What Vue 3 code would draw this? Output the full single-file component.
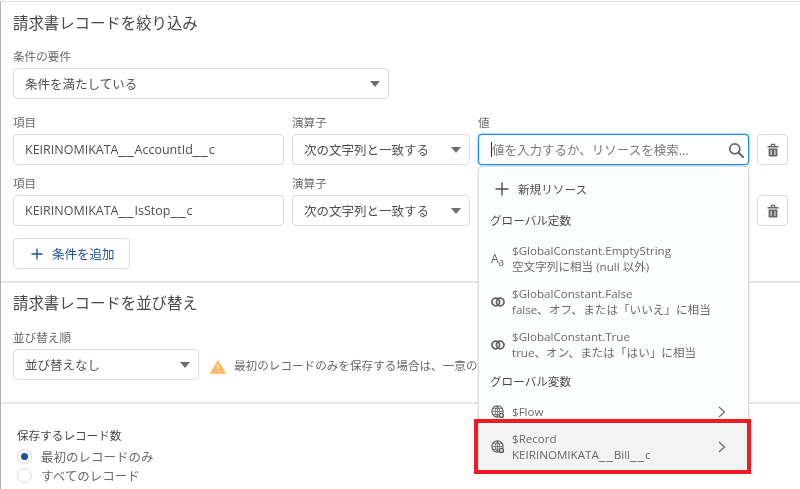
<script setup>
const conditionRows = [
  { field: "KEIRINOMIKATA__AccountId__c", active: true },
  { field: "KEIRINOMIKATA__IsStop__c", active: false },
];

const constants = [
  { icon: "text", name: "$GlobalConstant.EmptyString", desc: "空文字列に相当 (null 以外)" },
  { icon: "rings", name: "$GlobalConstant.False", desc: "false、オフ、または「いいえ」に相当" },
  { icon: "rings", name: "$GlobalConstant.True", desc: "true、オン、または「はい」に相当" },
];

// the double underscores are wider in the original font
const apiParts = (name) => name.split(/(__)/);
</script>

<template>
  <div class="page">
    <section class="panel filter">
      <h2>請求書レコードを絞り込み</h2>
      <label class="label">条件の要件</label>
      <div class="box select wide">
        <span>条件を満たしている</span>
        <i class="caret"></i>
      </div>

      <div v-for="row in conditionRows" :key="row.field" class="cond">
        <div class="col col-field">
          <label class="label">項目</label>
          <div class="box">
            <span>
              <span v-for="(p, i) in apiParts(row.field)" :key="i" :class="{ us: p === '__' }">{{ p }}</span>
            </span>
          </div>
        </div>
        <div class="col col-op">
          <label class="label">演算子</label>
          <div class="box select">
            <span>次の文字列と一致する</span>
            <i class="caret"></i>
          </div>
        </div>
        <div class="col col-val">
          <label v-if="row.active" class="label">値</label>
          <label v-else class="label">&nbsp;</label>
          <div v-if="row.active" class="box search">
            <span class="cursor"></span>
            <span class="placeholder">値を入力するか、リソースを検索...</span>
            <svg class="search-icon" viewBox="0 0 16 16" width="16" height="16">
              <circle cx="6.8" cy="6.8" r="5" fill="none" stroke="#6b6967" stroke-width="1.8" />
              <path d="M10.5 10.5L15 15" stroke="#6b6967" stroke-width="2.1" stroke-linecap="round" />
            </svg>

            <div class="dropdown">
              <div class="new-res">
                <svg viewBox="0 0 14 14" width="14" height="14">
                  <path d="M7 0.5V13.5M0.5 7H13.5" stroke="#514f4d" stroke-width="1.4" />
                </svg>
                <span>新規リソース</span>
              </div>
              <div class="group group-first">グローバル定数</div>
              <div v-for="c in constants" :key="c.name" class="item">
                <span v-if="c.icon === 'text'" class="aa">A<small>a</small></span>
                <svg v-else class="item-icon" viewBox="0 0 14 14" width="14" height="14">
                  <circle cx="4.8" cy="7" r="3.8" fill="none" stroke="#666462" stroke-width="1.8" />
                  <circle cx="9.2" cy="7" r="3.8" fill="none" stroke="#666462" stroke-width="1.8" />
                </svg>
                <div class="item-text">
                  <div>{{ c.name }}</div>
                  <div>{{ c.desc }}</div>
                </div>
              </div>
              <div class="group group-second">グローバル変数</div>
              <div class="item flow">
                <svg class="item-icon" viewBox="0 0 14 14" width="14" height="14">
                  <circle cx="6.5" cy="6.5" r="5.6" fill="none" stroke="#666462" stroke-width="1.2" />
                  <path d="M1 6.5H12M6.5 1V12M2 3.6H11M2 9.4H11M6.5 1C3.6 4 3.6 9 6.5 12M6.5 1C9.4 4 9.4 9 6.5 12" fill="none" stroke="#666462" stroke-width="0.8" />
                  <circle cx="10.4" cy="10.4" r="2.9" fill="#fff" />
                  <circle cx="10.4" cy="10.4" r="2" fill="none" stroke="#55534f" stroke-width="1.4" />
                </svg>
                <div class="item-text"><div>$Flow</div></div>
                <svg class="chev" viewBox="0 0 8 12" width="8" height="12">
                  <path d="M1 1L6.5 6L1 11" fill="none" stroke="#706e6b" stroke-width="1.3" />
                </svg>
              </div>
              <div class="item record">
                <svg class="item-icon" viewBox="0 0 14 14" width="14" height="14">
                  <circle cx="6.5" cy="6.5" r="5.6" fill="none" stroke="#666462" stroke-width="1.2" />
                  <path d="M1 6.5H12M6.5 1V12M2 3.6H11M2 9.4H11M6.5 1C3.6 4 3.6 9 6.5 12M6.5 1C9.4 4 9.4 9 6.5 12" fill="none" stroke="#666462" stroke-width="0.8" />
                  <circle cx="10.4" cy="10.4" r="2.9" fill="#f3f3f3" />
                  <circle cx="10.4" cy="10.4" r="2" fill="none" stroke="#55534f" stroke-width="1.4" />
                </svg>
                <div class="item-text">
                  <div>$Record</div>
                  <div>
                    <span v-for="(p, i) in apiParts('KEIRINOMIKATA__Bill__c')" :key="i" :class="{ us: p === '__' }">{{ p }}</span>
                  </div>
                </div>
                <svg class="chev" viewBox="0 0 8 12" width="8" height="12">
                  <path d="M1 1L6.5 6L1 11" fill="none" stroke="#706e6b" stroke-width="1.3" />
                </svg>
                <div class="highlight"></div>
              </div>
            </div>
          </div>
          <div v-else class="box"></div>
        </div>
        <div class="box trash">
          <svg viewBox="0 0 14 14" width="14" height="14">
            <path d="M1.5 3H12.5V4.6H1.5ZM4.8 0.8H9.2V3H8V2H6V3H4.8ZM2.6 5.4H11.4V12.6A0.9 0.9 0 0 1 10.5 13.5H3.5A0.9 0.9 0 0 1 2.6 12.6ZM4.6 7V12H5.6V7ZM8.4 7V12H9.4V7Z" fill="#666462" fill-rule="evenodd" />
          </svg>
        </div>
      </div>

      <button class="add">
        <svg viewBox="0 0 12 12" width="12" height="12">
          <path d="M6 0.5V11.5M0.5 6H11.5" stroke="#1b5297" stroke-width="1.3" />
        </svg>
        <span>条件を追加</span>
      </button>
    </section>

    <section class="panel sort">
      <h2>請求書レコードを並び替え</h2>
      <label class="label">並び替え順</label>
      <div class="sort-row">
        <div class="box select narrow">
          <span>並び替えなし</span>
          <i class="caret"></i>
        </div>
        <svg class="warn" viewBox="0 0 16 14" width="16" height="14">
          <path d="M8 0.4L15.8 13.6H0.2Z" fill="#ffb75d" stroke="#ffb75d" stroke-width="0.6" stroke-linejoin="round" />
          <path d="M8 4.6V9M8 10.2V11.6" stroke="#fff" stroke-width="1.4" />
        </svg>
        <span class="warn-text">最初のレコードのみを保存する場合は、一意の</span>
      </div>
    </section>

    <section class="store">
      <div class="store-title">保存するレコード数</div>
      <div class="radio-line"><i class="radio on"></i><span>最初のレコードのみ</span></div>
      <div class="radio-line"><i class="radio"></i><span>すべてのレコード</span></div>
    </section>
  </div>
</template>

<style>
html,
body {
  background: #fff;
}
</style>

<style scoped>
.page {
  width: 800px;
  height: 489px;
  box-sizing: border-box;
  overflow: hidden;
  background: #fff;
  border-left: 1px solid #b0b0b0;
  border-top: 1px solid #dedede;
  margin-top: 1px;
  font-family: "Open Sans", "Noto Sans CJK JP", sans-serif;
  font-size: 12.5px;
  color: #514f4d;
  filter: blur(0.3px);
}

.panel {
  border-bottom: 2px solid #e6e6e6;
  padding: 0 12px;
}

.filter {
  height: 279px;
}

.sort {
  height: 119px;
}

h2 {
  margin: 0;
  font-weight: 400;
  font-size: 15.4px;
  line-height: 20px;
  color: #4a4846;
}

.filter h2 {
  padding-top: 12px;
}

.sort h2 {
  padding-top: 11px;
}

.label {
  display: block;
  font-size: 11.6px;
  line-height: 16px;
  color: #6b6967;
}

.filter > .label {
  margin-top: 15px;
  margin-bottom: 3px;
}

.sort > .label {
  margin-top: 16px;
  margin-bottom: 3px;
}

.box {
  box-sizing: border-box;
  height: 31px;
  border: 1px solid #dddbda;
  border-radius: 4px;
  background: #fff;
  padding: 0 11px;
  display: flex;
  align-items: center;
  white-space: nowrap;
}

.us {
  font-family: "DejaVu Sans", sans-serif;
  font-size: 1.12em;
  line-height: 1;
  letter-spacing: 1px;
}

.select {
  justify-content: space-between;
  padding-right: 8px;
}

.wide {
  width: 376px;
}

.narrow {
  width: 186px;
}

.caret {
  width: 0;
  height: 0;
  border-left: 5px solid transparent;
  border-right: 5px solid transparent;
  border-top: 6px solid #706e6b;
}

.cond {
  display: flex;
  align-items: flex-end;
  margin-top: 11px;
}

.wide + .cond {
  margin-top: 16px;
}

.col-field {
  width: 271px;
}

.col-op {
  width: 178px;
  margin-left: 8px;
}

.col-val {
  width: 271px;
  margin-left: 8px;
}

.col .label {
  margin-bottom: 3px;
}

.search {
  position: relative;
  border-color: #1589ee;
  box-shadow: 0 0 2px #1589ee;
  padding-left: 12px;
  z-index: 2;
}

.cursor {
  width: 1px;
  height: 15px;
  background: #333;
}

.placeholder {
  color: #7b7977;
}

.search-icon {
  position: absolute;
  right: 4px;
  top: 7px;
}

.dropdown {
  position: absolute;
  left: -1px;
  top: 31px;
  width: 271px;
  height: 304px;
  box-sizing: border-box;
  background: #fcfefe;
  border: 1px solid #dddbda;
  border-radius: 4px;
  box-shadow: 0 1px 3px rgba(0, 0, 0, 0.16);
}

.new-res {
  display: flex;
  align-items: center;
  gap: 9px;
  padding-left: 16px;
  height: 43px;
  box-sizing: border-box;
  font-size: 11.6px;
}

.group {
  padding-left: 11px;
  line-height: 16px;
  font-size: 11.6px;
  color: #4a4846;
}

.group-first {
  margin-top: 3px;
}

.group-second {
  margin-top: 8px;
}

.item {
  display: flex;
  align-items: center;
  position: relative;
  padding-left: 12px;
  height: 43px;
}

.group-first + .item {
  margin-top: 8px;
}

.flow {
  height: 24px;
  margin-top: 10px;
}

.record {
  height: 46px;
  background: #f3f3f3;
}

.item-icon {
  flex: none;
}

.aa {
  width: 14px;
  font-size: 12px;
  line-height: 1;
  color: #666462;
  white-space: nowrap;
}

.aa small {
  font-size: 10px;
  position: relative;
  top: 3px;
}

.item-text {
  margin-left: 7px;
  font-size: 11.6px;
  line-height: 16px;
  color: #6b6967;
}

.chev {
  position: absolute;
  right: 22px;
  top: 50%;
  margin-top: -6px;
}

.highlight {
  position: absolute;
  left: -5px;
  right: -3px;
  top: -5px;
  bottom: -4px;
  border: 4px solid #ed1c24;
}

.trash {
  width: 31px;
  margin-left: 8px;
  padding: 0;
  justify-content: center;
}

.add {
  display: flex;
  align-items: center;
  gap: 9px;
  width: 117px;
  height: 31px;
  margin-top: 12px;
  padding: 0 0 0 17px;
  box-sizing: border-box;
  background: #fff;
  border: 1px solid #dddbda;
  border-radius: 4px;
  font: inherit;
  font-size: 12.5px;
  color: #1b5297;
}

.sort-row {
  display: flex;
  align-items: center;
}

.warn {
  margin-left: 11px;
  margin-top: 4px;
  flex: none;
}

.warn-text {
  margin-left: 8px;
  font-size: 11.6px;
  color: #6b6967;
  white-space: nowrap;
}

.store {
  padding: 24px 0 0 16px;
}

.store-title {
  font-size: 11.6px;
  line-height: 16px;
  color: #4a4846;
}

.radio-line {
  display: flex;
  align-items: center;
  gap: 9px;
  height: 19px;
  margin-top: 3px;
  color: #6b6967;
}

.radio-line + .radio-line {
  margin-top: 0;
}

.radio {
  box-sizing: border-box;
  width: 15px;
  height: 15px;
  border: 1px solid #dddbda;
  border-radius: 50%;
  background: #fff;
  display: block;
  position: relative;
}

.radio.on::after {
  content: "";
  position: absolute;
  left: 3px;
  top: 3px;
  width: 7px;
  height: 7px;
  border-radius: 50%;
  background: #1b5297;
}
</style>
